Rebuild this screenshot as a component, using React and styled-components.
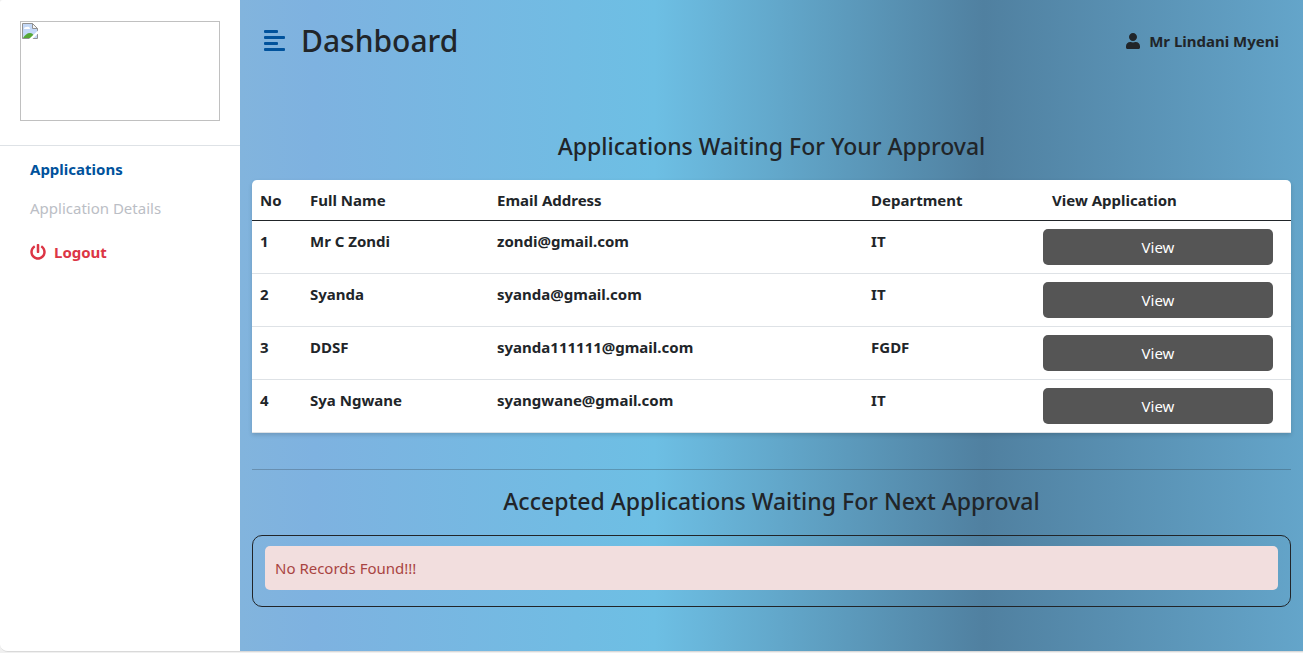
import React from "react";
import styled, { createGlobalStyle } from "styled-components";
import { FaUser, FaPowerOff } from "react-icons/fa";

const GlobalStyle = createGlobalStyle`
  *, *::before, *::after { box-sizing: border-box; }
  body {
    margin: 0;
    background: #f0f0f0;
    color: #212529;
    font-family: "Segoe UI", "Noto Sans", sans-serif;
    font-size: 15px;
    line-height: 24px;
  }
`;

const Shell = styled.div`
  display: flex;
  min-height: calc(100vh - 1px);
  border-bottom: 1px solid #d9d9d9;
  border-radius: 0 0 0 8px;
  overflow: hidden;
`;

const Sidebar = styled.aside`
  flex: 0 0 240px;
  background: #fff;
  border-radius: 3px 0 0 0;
`;

const Brand = styled.div`
  padding: 21px 20px 24px;
  border-bottom: 1px solid #dee2e6;
`;

const MissingLogo = styled.div`
  height: 100px;
  padding: 1px;
  border: 1px solid #c0c0c0;

  svg { display: block; }
`;

const Nav = styled.nav`
  display: flex;
  flex-direction: column;
  align-items: flex-start;
  padding: 11px 30px;
  gap: 15px;
`;

const NavLink = styled.a`
  display: flex;
  align-items: center;
  gap: 8px;
  text-decoration: none;
  color: ${({ $color }) => $color};
  font-weight: ${({ $bold }) => ($bold ? 700 : 400)};
`;

const LogoutLink = styled(NavLink)`
  margin-top: 5px;
`;

const Main = styled.main`
  flex: 1;
  min-width: 0;
  padding: 0 12px 44px;
  background: linear-gradient(
    90deg,
    #82b4dd 0%,
    #7eb2e0 7%,
    #6dbfe4 39%,
    #5080a0 70%,
    #64a5ca 100%
  );
`;

const TopBar = styled.header`
  display: flex;
  align-items: center;
  justify-content: space-between;
  padding: 21px 12px;
`;

const TitleGroup = styled.div`
  display: flex;
  align-items: center;
  gap: 16px;
`;

const MenuButton = styled.button`
  display: block;
  padding: 0;
  border: 0;
  background: none;
  color: #00529c;
  cursor: pointer;

  svg { display: block; }
`;

const PageTitle = styled.h1`
  margin: 0;
  font-size: 30px;
  font-weight: 500;
  line-height: 40px;
`;

const User = styled.div`
  display: flex;
  align-items: center;
  gap: 8px;
  font-weight: 700;
`;

const SectionTitle = styled.h2`
  margin: 0 0 20px;
  text-align: center;
  font-size: 23px;
  font-weight: 500;
  line-height: 28px;
`;

const Approvals = styled.section`
  padding-top: 50px;
`;

const Table = styled.table`
  width: 100%;
  table-layout: fixed;
  border-spacing: 0;
  background: #fff;
  border-radius: 5px 5px 0 0;
  box-shadow: 0 2px 4px rgba(0, 0, 0, 0.15);
`;

const Col = styled.col`
  width: ${({ $width }) => $width};
`;

const HeadCell = styled.th`
  height: 41px;
  padding: 8px 8px 8px ${({ $inset }) => ($inset ? "17px" : "8px")};
  border-bottom: 1px solid #212529;
  text-align: left;
`;

const Cell = styled.td`
  padding: 8px;
  border-bottom: 1px solid #dee2e6;
  font-weight: 700;
  vertical-align: top;
`;

const ActionCell = styled(Cell)`
  padding-right: 18px;
`;

const ViewButton = styled.button`
  display: block;
  width: 100%;
  height: 36px;
  border: 0;
  border-radius: 5px;
  background: #555;
  color: #fff;
  font: inherit;
  font-weight: 400;
  cursor: pointer;
`;

const Divider = styled.hr`
  margin: 36px 0 17px;
  border: 0;
  border-top: 1px solid rgba(33, 37, 41, 0.25);
`;

const Panel = styled.div`
  padding: 10px 12px 16px;
  border: 1px solid #212529;
  border-radius: 10px;
`;

const Alert = styled.p`
  margin: 0;
  padding: 10px;
  border-radius: 5px;
  background: #f2dede;
  color: #a94442;
`;

const BrokenImageIcon = () => (
  <svg width="16" height="16" viewBox="0 0 16 16" aria-hidden="true">
    <path d="M0.5 0.5h10l5 5v10h-15z" fill="#c3d8f7" stroke="#929292" />
    <path d="M2 6c0-2 2-2 3-2 2-1 3 1 3 2z" fill="#fff" />
    <path d="M1 15c2-3 4-5 7-5 2 0 3 1 4 3l-1 2z" fill="#55a835" />
    <path d="M10.5 0.5v5h5z" fill="#f5f5f5" stroke="#929292" />
    <path d="M16 0v5L11 0z" fill="#fff" />
    <path d="M16 7.5v3L10.5 16H7z" fill="#fff" />
  </svg>
);

const MenuIcon = () => (
  <svg width="21" height="22" viewBox="0 0 21 22" fill="currentColor" aria-hidden="true">
    <rect width="14" height="3" rx="1" />
    <rect y="6" width="21" height="3" rx="1" />
    <rect y="12" width="14" height="3" rx="1" />
    <rect y="18" width="21" height="3" rx="1" />
  </svg>
);

const applications = [
  { name: "Mr C Zondi", email: "zondi@gmail.com", department: "IT" },
  { name: "Syanda", email: "syanda@gmail.com", department: "IT" },
  { name: "DDSF", email: "syanda111111@gmail.com", department: "FGDF" },
  { name: "Sya Ngwane", email: "syangwane@gmail.com", department: "IT" },
];

export default function App() {
  return (
    <>
      <GlobalStyle />
      <Shell>
        <Sidebar>
          <Brand>
            <MissingLogo><BrokenImageIcon /></MissingLogo>
          </Brand>
          <Nav>
            <NavLink href="#applications" $color="#00529c" $bold>Applications</NavLink>
            <NavLink href="#details" $color="#bbbec5">Application Details</NavLink>
            <LogoutLink href="#logout" $color="#dc3545" $bold>
              <FaPowerOff size={16} />
              Logout
            </LogoutLink>
          </Nav>
        </Sidebar>
        <Main>
          <TopBar>
            <TitleGroup>
              <MenuButton type="button" aria-label="Toggle menu"><MenuIcon /></MenuButton>
              <PageTitle>Dashboard</PageTitle>
            </TitleGroup>
            <User>
              <FaUser size={16} />
              Mr Lindani Myeni
            </User>
          </TopBar>
          <Approvals>
            <SectionTitle>Applications Waiting For Your Approval</SectionTitle>
            <Table>
              <colgroup>
                <Col $width="50px" />
                <Col $width="18%" />
                <Col $width="36%" />
                <Col $width="auto" />
                <Col $width="256px" />
              </colgroup>
              <thead>
                <tr>
                  <HeadCell>No</HeadCell>
                  <HeadCell>Full Name</HeadCell>
                  <HeadCell>Email Address</HeadCell>
                  <HeadCell>Department</HeadCell>
                  <HeadCell $inset>View Application</HeadCell>
                </tr>
              </thead>
              <tbody>
                {applications.map((item, index) => (
                  <tr key={item.email}>
                    <Cell>{index + 1}</Cell>
                    <Cell>{item.name}</Cell>
                    <Cell>{item.email}</Cell>
                    <Cell>{item.department}</Cell>
                    <ActionCell>
                      <ViewButton type="button">View</ViewButton>
                    </ActionCell>
                  </tr>
                ))}
              </tbody>
            </Table>
          </Approvals>
          <Divider />
          <section>
            <SectionTitle>Accepted Applications Waiting For Next Approval</SectionTitle>
            <Panel>
              <Alert>No Records Found!!!</Alert>
            </Panel>
          </section>
        </Main>
      </Shell>
    </>
  );
}
